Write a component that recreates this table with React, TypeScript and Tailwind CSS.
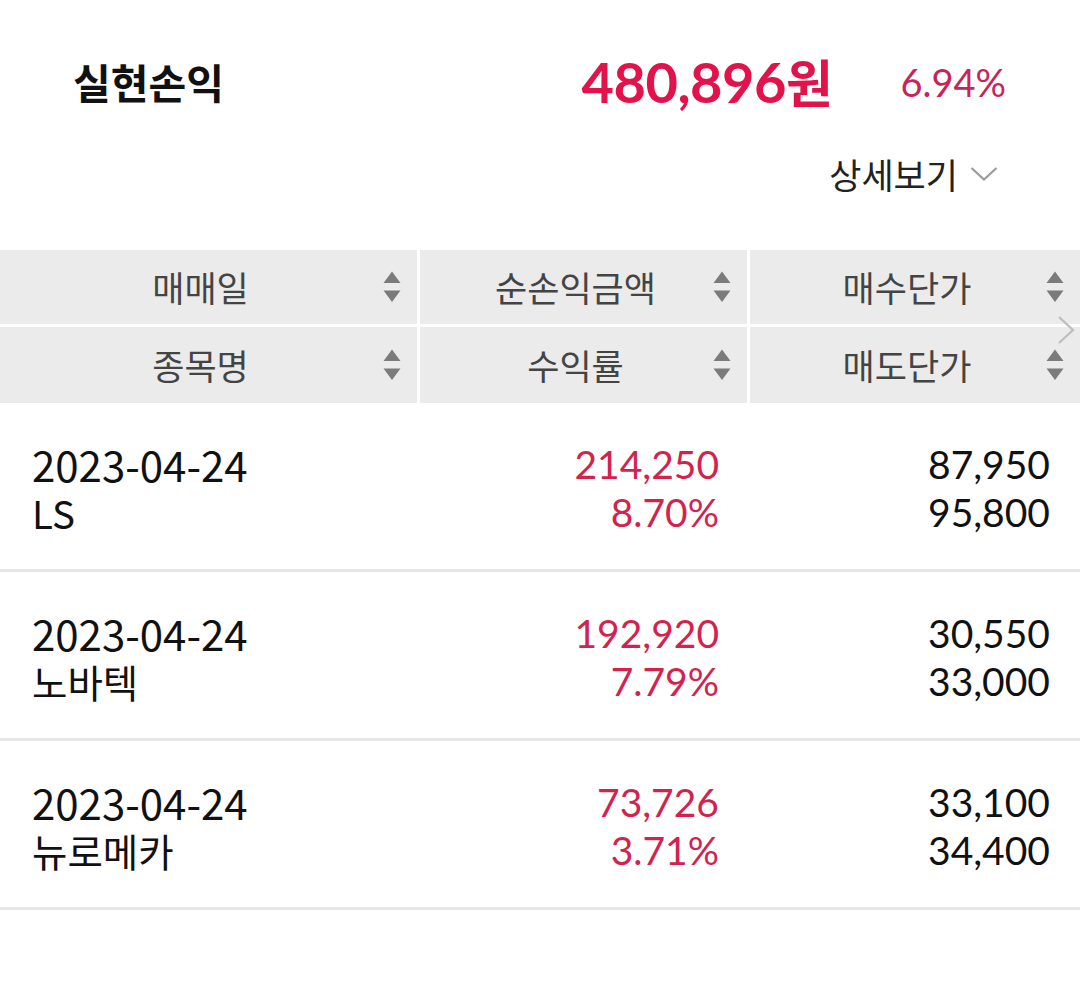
import React from "react";

interface Trade {
  date: string;
  name: string;
  profit: string;
  rate: string;
  buy: string;
  sell: string;
}

const trades: Trade[] = [
  { date: "2023-04-24", name: "LS", profit: "214,250", rate: "8.70%", buy: "87,950", sell: "95,800" },
  { date: "2023-04-24", name: "노바텍", profit: "192,920", rate: "7.79%", buy: "30,550", sell: "33,000" },
  { date: "2023-04-24", name: "뉴로메카", profit: "73,726", rate: "3.71%", buy: "33,100", sell: "34,400" },
];

const kr = "font-['Noto_Sans_CJK_KR','Noto_Sans',sans-serif]";
const num = "font-['Lato','Noto_Sans_CJK_KR',sans-serif]";

//////////

function SortIcon() {
  return (
    <svg width="18" height="32" viewBox="0 0 18 32" className="shrink-0">
      <path d="M9 0.5 L17.5 12 L0.5 12 Z" fill="#7b7b7b" />
      <path d="M0.5 19.5 L17.5 19.5 L9 31 Z" fill="#7b7b7b" />
    </svg>
  );
}

function HeadCell({ label }: { label: string }) {
  return (
    <div className="flex items-center bg-[#ebebeb] pr-[16px]">
      <span className={`flex-1 -mr-[18px] text-center text-[35px] leading-[44px] text-[#444] ${kr}`}>{label}</span>
      <SortIcon />
    </div>
  );
}

//////////

function TradeRow({ t }: { t: Trade }) {
  return (
    <div className="grid h-[169px] grid-cols-[417px_330px_1fr] items-center border-b-[3px] border-[#e6e6e6] leading-[48px]">
      <div className={`flex flex-col pl-[32px] pt-[4px] text-[#111] ${kr}`}>
        <span className="h-[48px] text-[42px] leading-[48px]">{t.date}</span>
        <span className="h-[48px] text-[38.5px] leading-[48px]">{t.name}</span>
      </div>
      <div className={`flex flex-col items-end pr-[28px] pt-[4px] text-[39px] text-[#d2234f] ${num}`}>
        <span>{t.profit}</span>
        <span>{t.rate}</span>
      </div>
      <div className={`flex flex-col items-end pr-[30px] pt-[4px] text-[39px] text-[#111] ${num}`}>
        <span>{t.buy}</span>
        <span>{t.sell}</span>
      </div>
    </div>
  );
}

//////////

export default function App() {
  return (
    <div className="h-[988px] w-[1080px] overflow-hidden bg-white">
      <div className="mt-[44px] flex h-[76px] items-center pl-[73px] pr-[74px]">
        <span className={`flex-1 text-[41px] font-bold text-[#111] ${kr}`}>실현손익</span>
        <span className={`text-[56px] font-bold tracking-[-0.5px] text-[#e2134a] ${num}`}>
          480,896<span className={`text-[51px] ${kr}`}>원</span>
        </span>
        <span className={`ml-[68px] text-[38px] text-[#c82457] ${num}`}>6.94%</span>
      </div>

      <div className="mt-[34px] flex h-[40px] items-center justify-end gap-[12px] pr-[82px]">
        <span className={`text-[35px] leading-[40px] text-[#222] ${kr}`}>상세보기</span>
        <svg width="28" height="16" viewBox="0 0 28 16">
          <polyline points="1.5,2 14,13.5 26.5,2" fill="none" stroke="#9a9a9a" strokeWidth="2.2" />
        </svg>
      </div>

      <div className="relative mt-[56px]">
        <div className="grid grid-cols-[417px_327px_1fr] grid-rows-[74px_76px] gap-[3px]">
          <HeadCell label="매매일" />
          <HeadCell label="순손익금액" />
          <HeadCell label="매수단가" />
          <HeadCell label="종목명" />
          <HeadCell label="수익률" />
          <HeadCell label="매도단가" />
        </div>
        <svg
          width="18"
          height="30"
          viewBox="0 0 18 30"
          className="absolute right-[5px] top-[65px]"
        >
          <polyline points="2,2 16,15 2,28" fill="none" stroke="#bdbdbd" strokeWidth="2.2" />
        </svg>
      </div>

      <div>
        {trades.map((t, i) => (
          <TradeRow key={i} t={t} />
        ))}
      </div>
    </div>
  );
}
